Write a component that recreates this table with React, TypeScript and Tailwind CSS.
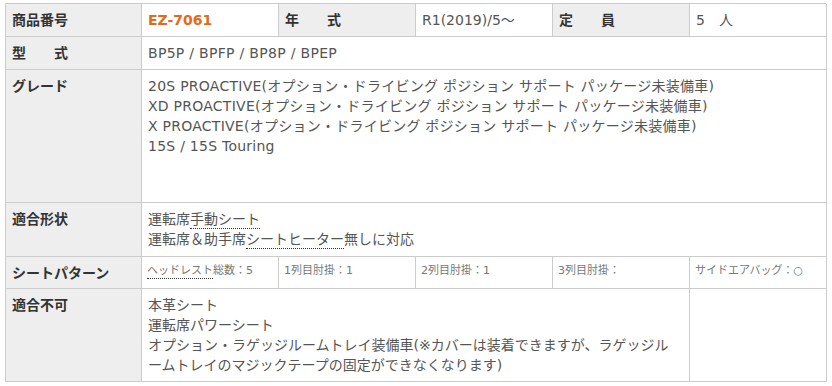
import React from "react";

const font = "font-['DejaVu_Sans','Noto_Sans_CJK_JP',sans-serif]";

const label = "bg-[#eeeeee] border-r border-b border-[#cccccc] px-[6px] pt-[6px] text-[14px] leading-[20px] font-bold text-[#333333]";
const value = "bg-white border-r border-b border-[#cccccc] px-[6px] pt-[6px] text-[14px] leading-[20px] text-[#555555]";
const small = "bg-white border-r border-b border-[#cccccc] px-[5px] pt-[6px] text-[11px] leading-[16px] text-[#777777]";

function Dotted({ children }: { children: React.ReactNode }) {
  return <span className="border-b border-dotted border-[#333333] pb-[1px]">{children}</span>;
}

export default function App() {
  return (
    <div className={`w-[832px] h-[386px] bg-white ${font}`}>
      <div className="ml-[5px] mt-[3px] grid grid-cols-[136px_137px_137px_137px_137px_137px] grid-rows-[33px_33px_133px_54px_32px_93px] w-[821px] border-t border-l border-[#cccccc]">
        {/* row 1 */}
        <div className={label}>商品番号</div>
        <div className={`${value} font-bold text-[#e8681a]`}>EZ-7061</div>
        <div className={label}>年　　式</div>
        <div className={value}>R1(2019)/5～</div>
        <div className={label}>定　　員</div>
        <div className={value}>5　人</div>

        {/* row 2 */}
        <div className={label}>型　　式</div>
        <div className={`${value} col-span-5 tracking-[0.3px]`}>BP5P / BPFP / BP8P / BPEP</div>

        {/* row 3 */}
        <div className={label}>グレード</div>
        <div className={`${value} col-span-5 tracking-[0.25px]`}>
          <p>20S PROACTIVE(オプション・ドライビング ポジション サポート パッケージ未装備車)</p>
          <p>XD PROACTIVE(オプション・ドライビング ポジション サポート パッケージ未装備車)</p>
          <p>X PROACTIVE(オプション・ドライビング ポジション サポート パッケージ未装備車)</p>
          <p>15S / 15S Touring</p>
        </div>

        {/* row 4 */}
        <div className={label}>適合形状</div>
        <div className={`${value} col-span-5`}>
          <p>運転席<Dotted>手動シート</Dotted></p>
          <p>運転席＆助手席<Dotted>シートヒーター</Dotted>無しに対応</p>
        </div>

        {/* row 5 */}
        <div className={label}>シートパターン</div>
        <div className={small}><Dotted>ヘッドレスト</Dotted>総数：5</div>
        <div className={small}>1列目肘掛：1</div>
        <div className={small}>2列目肘掛：1</div>
        <div className={small}>3列目肘掛：</div>
        <div className={`${small} text-[#5566bb]`}>サイドエアバッグ：○</div>

        {/* row 6 */}
        <div className={label}>適合不可</div>
        <div className={`${value} col-span-4 pr-[9px]`}>
          <p>本革シート</p>
          <p>運転席パワーシート</p>
          <p>オプション・ラゲッジルームトレイ装備車(※カバーは装着できますが、ラゲッジルームトレイのマジックテープの固定ができなくなります)</p>
        </div>
        <div className={value}></div>
      </div>
    </div>
  );
}
